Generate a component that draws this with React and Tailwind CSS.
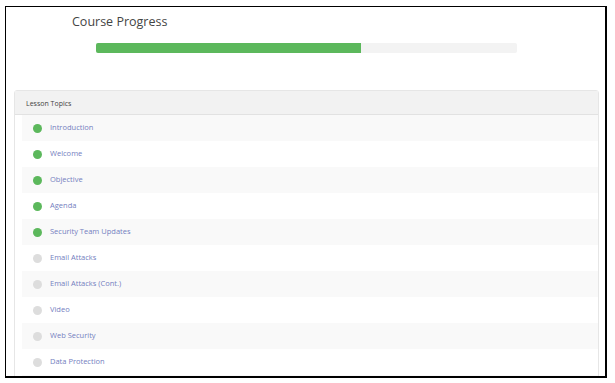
import React from 'react';

const topics = [
  { title: 'Introduction', done: true },
  { title: 'Welcome', done: true },
  { title: 'Objective', done: true },
  { title: 'Agenda', done: true },
  { title: 'Security Team Updates', done: true },
  { title: 'Email Attacks', done: false },
  { title: 'Email Attacks (Cont.)', done: false },
  { title: 'Video', done: false },
  { title: 'Web Security', done: false },
  { title: 'Data Protection', done: false },
];

const progress = 63;

const App = () => {
  return (
    <div className="w-[615px] h-[383px] bg-white overflow-hidden" style={{ fontFamily: '"Open Sans", sans-serif' }}>
      <div className="ml-[5px] mt-[6px] w-[602px] h-[372px] border-l border-t border-r-2 border-b-2 border-black overflow-hidden">
        <h1 className="ml-[66px] mt-[5px] text-[12.5px] leading-[20px] text-[#444]">Course Progress</h1>

        {/* Progress bar */}
        <div className="ml-[90px] mt-[11px] w-[421px] h-[10px] rounded-[2px] bg-[#f3f3f3] overflow-hidden">
          <div className="h-full bg-[#5cb85c]" style={{ width: `${progress}%` }} />
        </div>

        {/* Lesson topics panel */}
        <div className="ml-[8px] mt-[37px] w-[585px] border border-[#e6e6e6] rounded-t-[3px]">
          <div className="h-[24px] flex items-center pl-[11px] pt-[3px] bg-[#f2f2f2] border-b border-[#e2e2e2] text-[7px] text-[#444]">
            Lesson Topics
          </div>
          <div className="ml-[7px]">
            {topics.map((topic, index) => (
              <div
                key={topic.title}
                className={`h-[26px] flex items-center pl-[11px] ${index % 2 === 0 ? 'bg-[#f9f9f9]' : 'bg-white'}`}
              >
                <span className={`w-[9px] h-[9px] rounded-full ${topic.done ? 'bg-[#5cb85c]' : 'bg-[#dddddd]'}`} />
                <span className="ml-[8px] text-[7.5px] text-[#7480c0]">{topic.title}</span>
              </div>
            ))}
            <div className="h-[26px] bg-[#f9f9f9]" />
          </div>
        </div>
      </div>
    </div>
  );
};

export default App;
